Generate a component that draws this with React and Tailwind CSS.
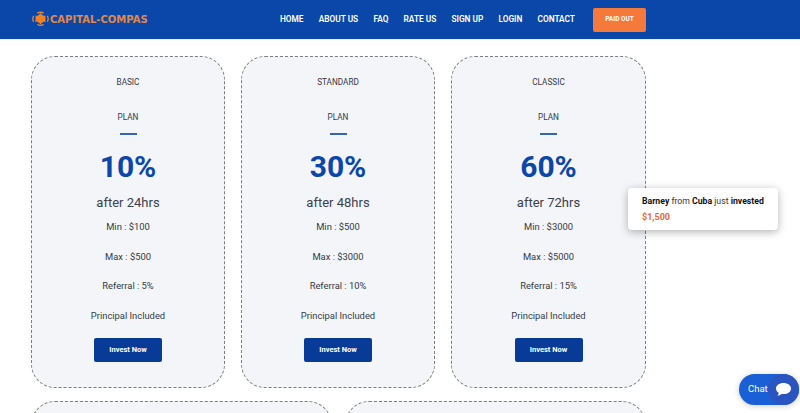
const NAV = ["HOME", "ABOUT US", "FAQ", "RATE US", "SIGN UP", "LOGIN", "CONTACT"];
const PLANS = [
  { name: "BASIC", pct: "10%", after: "after 24hrs", min: "$100", max: "$500", ref: "5%" },
  { name: "STANDARD", pct: "30%", after: "after 48hrs", min: "$500", max: "$3000", ref: "10%" },
  { name: "CLASSIC", pct: "60%", after: "after 72hrs", min: "$3000", max: "$5000", ref: "15%" },
];

function Logo() {
  return (
    <svg width="19" height="18" viewBox="0 0 21 18" className="shrink-0">
      <path d="M10.5 2.5 L13 5.5 H16 V12 H13 L10.5 15 L8 12 H5 V5.5 H8 Z" fill="#f58220" />
      <circle cx="10.5" cy="8.8" r="4.6" fill="#f58220" />
      <path d="M6.5 2.2 Q10.5 -0.6 14.5 2.2 L13.5 3.2 Q10.5 1.5 7.5 3.2 Z" fill="#e8873a" />
      <path d="M6.5 15.4 Q10.5 18.2 14.5 15.4 L13.5 14.4 Q10.5 16.1 7.5 14.4 Z" fill="#e8873a" />
      <path d="M2.4 5.2 Q0.2 8.9 2.4 12.6 L3.4 11.8 Q1.9 8.9 3.4 6 Z" fill="#e8873a" />
      <path d="M18.6 5.2 Q20.8 8.9 18.6 12.6 L17.6 11.8 Q19.1 8.9 17.6 6 Z" fill="#e8873a" />
    </svg>
  );
}

function Card({ p }) {
  return (
    <div className="h-[332px] rounded-[24px] border border-dashed border-[#7d7d7d] bg-[#f4f5f9] flex flex-col items-center pt-[17px] text-[#333a46]">
      <div className="text-[8.2px] leading-[16px] h-[16px]">{p.name}</div>
      <div className="text-[8.2px] leading-[16px] h-[16px] mt-[19px]">PLAN</div>
      <div className="w-[17px] h-[2px] bg-[#3566b0] mt-[8px]"></div>
      <div className="text-[30px] leading-[38px] font-bold text-[#0b47a8] mt-[13px]">{p.pct}</div>
      <div className="text-[13px] leading-[20px] text-[#3a414d] mt-[7px]">{p.after}</div>
      <div className="text-[9.4px] leading-[16px] mt-[6px]">Min : {p.min}</div>
      <div className="text-[9.4px] leading-[16px] mt-[14px]">Max : {p.max}</div>
      <div className="text-[9.4px] leading-[16px] mt-[13px]">Referral : {p.ref}</div>
      <div className="text-[9.4px] leading-[16px] mt-[14px]">Principal Included</div>
      <button className="w-[68px] h-[24px] mt-[14px] rounded-[2px] bg-[#083b97] text-white text-[7.5px] font-bold">Invest Now</button>
    </div>
  );
}

export default function App() {
  return (
    <div className="relative w-[800px] h-[413px] overflow-hidden bg-white" style={{ fontFamily: "Roboto, sans-serif" }}>
      <header className="h-[40px] bg-[#0b47a8] border-b border-[#e6ecf6] flex items-center pl-[31px]">
        <div className="flex items-center w-[249px] -mt-[1px]">
          <Logo />
          <span className="text-[10px] font-bold text-[#e0894a]" style={{ fontFamily: "'DejaVu Sans', sans-serif" }}>CAPITAL-COMPAS</span>
        </div>
        <nav className="flex items-center gap-[15.2px] text-white text-[8.3px] font-semibold">
          {NAV.map((n) => (
            <span key={n}>{n}</span>
          ))}
        </nav>
        <button className="ml-auto mr-[154px] w-[53px] h-[24px] rounded-[2px] bg-[#f5793b] text-white text-[6.5px] font-bold">PAID OUT</button>
      </header>

      <main className="pl-[31px] pt-[16px] w-[646px]">
        <div className="grid grid-cols-[194px_194px_195px] gap-x-[16px]">
          {PLANS.map((p) => (
            <Card key={p.name} p={p} />
          ))}
        </div>
        <div className="grid grid-cols-[301px_301px] gap-x-[13px] mt-[13px]">
          <div className="h-[60px] rounded-[24px] border border-dashed border-[#7d7d7d] bg-[#f4f5f9]"></div>
          <div className="h-[60px] rounded-[24px] border border-dashed border-[#7d7d7d] bg-[#f4f5f9]"></div>
        </div>
      </main>

      <div className="absolute left-[628px] top-[188px] w-[150px] h-[42px] rounded-[4px] bg-white shadow-[0_2px_8px_rgba(0,0,0,0.3)] pl-[14px] pt-[6px]">
        <div className="text-[8.7px] leading-[14px] text-[#333]">
          <b className="font-bold text-[#111]">Barney</b> from <b className="font-bold text-[#111]">Cuba</b> just <b className="font-bold text-[#111]">invested</b>
        </div>
        <div className="text-[9px] leading-[14px] mt-[2px] font-bold text-[#e8683a]">$1,500</div>
      </div>

      <div className="absolute left-[739px] top-[374px] w-[60px] h-[31px] rounded-full bg-[#1b5fd6] shadow-[0_1px_6px_rgba(0,0,0,0.2)] flex items-center pl-[9px]">
        <span className="text-[9.5px] font-normal text-white">Chat</span>
        <div className="absolute right-0 top-0 w-[31px] h-[31px] rounded-full bg-[#2a55c0] flex items-center justify-center">
          <svg width="17" height="15" viewBox="0 0 17 15">
            <path d="M8.5 1C4.2 1 1 3.4 1 6.5c0 1.8 1.1 3.4 2.8 4.4-.2 1-.7 2-1.4 2.8 1.5-.1 3-.8 4.1-1.8.6.1 1.3.2 2 .2 4.3 0 7.5-2.5 7.5-5.6S12.8 1 8.5 1z" fill="white" />
          </svg>
        </div>
      </div>
    </div>
  );
}
